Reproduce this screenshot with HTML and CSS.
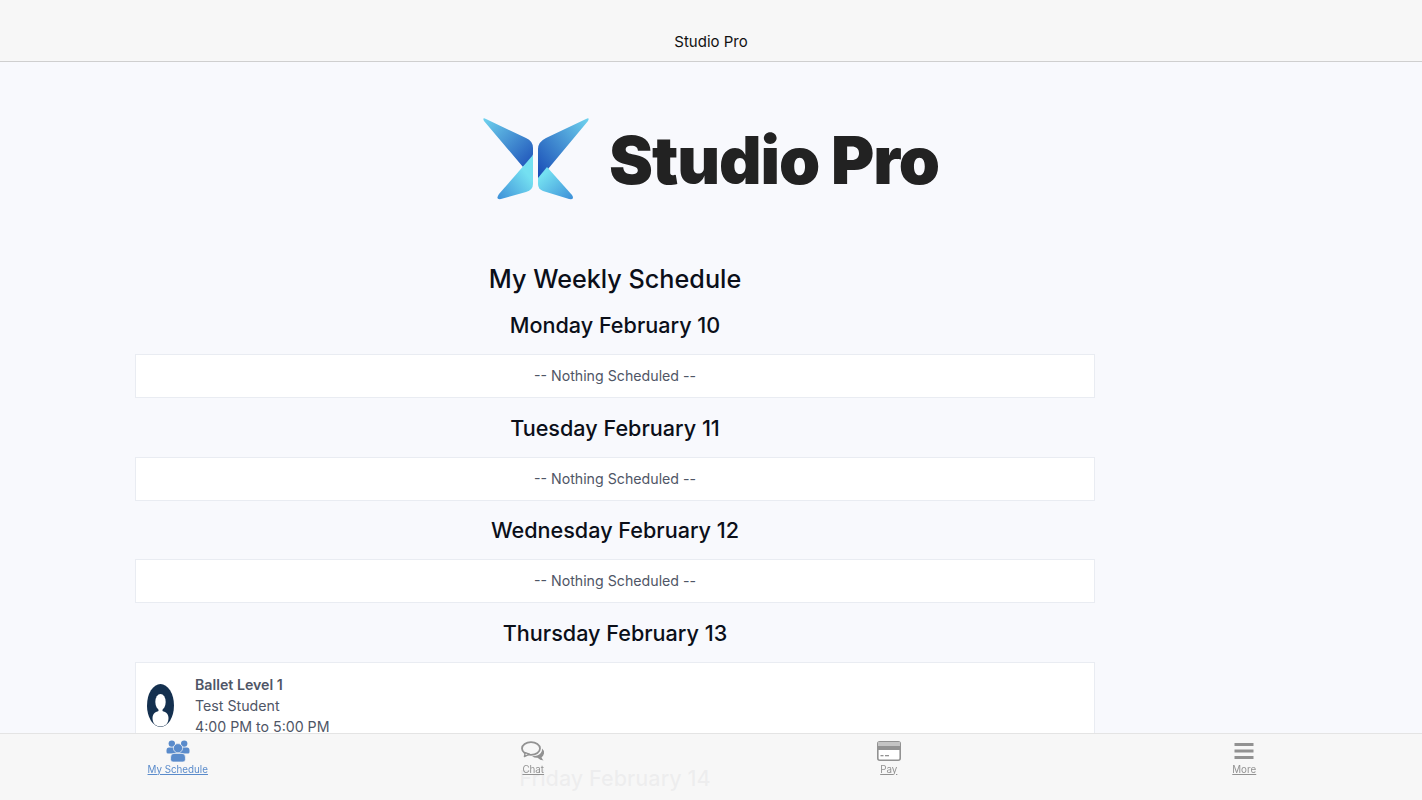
FILE: index.html
```html
<!DOCTYPE html>
<html lang="en">
  <head>
    <meta charset="UTF-8" />
    <title>Studio Pro</title>
    <link rel="stylesheet" href="styles.css">
  </head>
  <body>
    <header class="topbar">Studio Pro</header>
    <div class="logo">
      <svg class="logo-mark" viewBox="483 118 106 82" width="106" height="82">
        <defs>
          <linearGradient id="wingTop" x1="0" y1="0" x2="1" y2="1">
            <stop offset="0" stop-color="#6fd3ee" />
            <stop offset="1" stop-color="#1c4fb8" />
          </linearGradient>
          <linearGradient id="wingTopR" x1="1" y1="0" x2="0" y2="1">
            <stop offset="0" stop-color="#6fd3ee" />
            <stop offset="1" stop-color="#1546b4" />
          </linearGradient>
          <linearGradient id="wingLow" x1="1" y1="0" x2="0" y2="1">
            <stop offset="0.3" stop-color="#74e0f1" />
            <stop offset="1" stop-color="#3d8fd8" />
          </linearGradient>
          <linearGradient id="wingLowR" x1="0" y1="0" x2="1" y2="1">
            <stop offset="0.2" stop-color="#74e0f1" />
            <stop offset="1" stop-color="#3d8fd8" />
          </linearGradient>
        </defs>
        <path fill="url(#wingTop)" d="M484 121Q482 117 486 119L526 138Q533 141 533 148V154Q533 157 531 159L523 167Z" />
        <path fill="url(#wingTopR)" d="M588 121Q590 117 586 119L546 138Q538 142 538 149V181Z" />
        <path fill="url(#wingLow)" d="M533 155L499 194Q495 200 501 199L526 192Q533 190 533 184Z" />
        <path fill="url(#wingLowR)" d="M547 167L538 178V184Q538 189 543 191L569 199Q575 200 572 195Z" />
      </svg>
      <span class="logo-text">Studio Pro</span>
    </div>
    <main class="schedule">
      <h1>My Weekly Schedule</h1>
      <h2>Monday February 10</h2>
      <div class="card empty">-- Nothing Scheduled --</div>
      <h2>Tuesday February 11</h2>
      <div class="card empty">-- Nothing Scheduled --</div>
      <h2>Wednesday February 12</h2>
      <div class="card empty">-- Nothing Scheduled --</div>
      <h2>Thursday February 13</h2>
      <div class="card lesson">
        <svg class="avatar" viewBox="0 0 27 43" width="27" height="43">
          <ellipse cx="13.5" cy="21.5" rx="13.5" ry="21.5" fill="#14304f" />
          <ellipse cx="13.5" cy="18" rx="5.2" ry="8" fill="#fff" />
          <rect x="11.5" y="22" width="4" height="7" fill="#fff" />
          <path fill="#fff" d="M5.5 34C5.5 29.5 9 27 13.5 27S21.5 29.5 21.5 34C21.5 40 18 42.4 13.5 42.4S5.5 40 5.5 34Z" />
        </svg>
        <div class="lesson-info">
          <strong>Ballet Level 1</strong>
          <span>Test Student</span>
          <span>4:00 PM to 5:00 PM</span>
        </div>
      </div>
      <h2>Friday February 14</h2>
    </main>
    <nav class="tabs">
      <a class="tab active" href="#">
        <svg viewBox="0 0 24 22" width="24" height="22" fill="currentColor">
          <circle cx="5.8" cy="3.6" r="3.2" />
          <circle cx="18.2" cy="3.6" r="3.2" />
          <path d="M0.5 10.5Q0.5 7.6 3 7.6H21Q23.5 7.6 23.5 10.5V12Q23.5 13.5 22 13.5H2Q0.5 13.5 0.5 12Z" />
          <circle class="gap" cx="12" cy="8.2" r="4.6" />
          <path class="gap" d="M4.6 17Q4.6 13.4 8 13.4H16Q19.4 13.4 19.4 17V19.5Q19.4 22 17 22H7Q4.6 22 4.6 19.5Z" />
        </svg>
        <span>My Schedule</span>
      </a>
      <a class="tab" href="#">
        <svg viewBox="0 0 24 20" width="24" height="20" fill="currentColor">
          <path d="M21 7.5Q23.5 9.5 23 12.5Q22.5 15 20.5 16.2Q21.2 18 22.5 19.5Q19 19.2 16.5 16.8Q13.5 17 11 15.2Q17 15.2 19.8 12Q21.4 10 21 7.5Z" />
          <ellipse cx="10" cy="7.5" rx="9" ry="6.3" fill="none" stroke="currentColor" stroke-width="1.8" />
          <path d="M4.2 11.6L3.4 15.6L8.4 13.2Z" fill="#f7f7f7" stroke="currentColor" stroke-width="1.4" stroke-linejoin="round" />
        </svg>
        <span>Chat</span>
      </a>
      <a class="tab" href="#">
        <svg viewBox="0 0 24 20" width="24" height="20">
          <rect x="0.8" y="0.8" width="22.4" height="18.4" rx="2" fill="#fff" stroke="currentColor" stroke-width="1.6" />
          <rect x="1" y="1" width="22" height="4" fill="#c4c4c4" />
          <rect x="1" y="5" width="22" height="4" fill="currentColor" />
          <rect x="3.5" y="14" width="3" height="1.3" fill="currentColor" />
          <rect x="8" y="14" width="4" height="1.3" fill="currentColor" />
        </svg>
        <span>Pay</span>
      </a>
      <a class="tab" href="#">
        <svg viewBox="0 0 20 18" width="20" height="18" fill="currentColor">
          <rect x="0.5" y="1" width="19" height="3" />
          <rect x="0.5" y="7.5" width="19" height="3" />
          <rect x="0.5" y="14" width="19" height="3" />
        </svg>
        <span>More</span>
      </a>
    </nav>
  </body>
</html>
```
FILE: styles.css
```css
html,
body {
  height: 100%;
  overflow: hidden;
}
body {
  font-family: Inter, "Liberation Sans", sans-serif;
  background: #f8f9fd;
  margin: 0;
  color: #0b0f19;
}
.topbar {
  height: 52px;
  padding-bottom: 9px;
  background: #f7f7f7;
  border-bottom: 1px solid #cfcfcf;
  font-size: 15px;
  line-height: 20px;
  display: flex;
  align-items: flex-end;
  justify-content: center;
  color: #111;
}
.logo {
  display: flex;
  align-items: center;
  justify-content: center;
  gap: 20px;
  margin-top: 56px;
  height: 82px;
}
.logo-text {
  font-size: 66px;
  font-weight: 900;
  letter-spacing: -1.1px;
  color: #222;
  line-height: 82px;
  padding-top: 2px;
}
.schedule {
  width: 960px;
  margin-left: 135px;
  margin-top: 61px;
}
h1,
h2 {
  margin: 0;
  text-align: center;
  font-weight: 500;
  color: #0b0f19;
}
h1 {
  font-size: 25.2px;
  line-height: 36px;
  margin-bottom: 13px;
}
h2 {
  font-size: 21.6px;
  line-height: 30px;
  margin-bottom: 14px;
}
.card {
  background: #fff;
  border: 1px solid #e9ecf2;
  box-sizing: border-box;
  font-size: 14.2px;
  color: #4f5666;
  margin-bottom: 14.6px;
}
.empty {
  height: 44px;
  line-height: 42px;
  text-align: center;
}
.lesson {
  display: flex;
  align-items: flex-start;
  gap: 21px;
  height: 86px;
  padding: 11px 11px;
  margin-bottom: 15px;
}
.avatar {
  margin-top: 10px;
  flex: none;
}
.lesson-info {
  display: flex;
  flex-direction: column;
  line-height: 21.3px;
}
.lesson-info strong {
  font-weight: 600;
}
.tabs {
  position: fixed;
  left: 0;
  right: 0;
  bottom: 0;
  height: 66px;
  background: rgba(247, 247, 247, 0.96);
  border-top: 1px solid #e4e4e4;
  display: grid;
  grid-template-columns: repeat(4, 1fr);
}
.tab {
  display: flex;
  flex-direction: column;
  align-items: center;
  color: #929292;
  font-size: 9.8px;
  line-height: 12px;
  padding-top: 6px;
}
.tab svg {
  height: 22px;
  display: block;
}
.tab span {
  margin-top: 1.5px;
}
.tab.active {
  color: #5a8bcb;
}
.gap {
  stroke: #f7f7f7;
  stroke-width: 0.7;
}
```
